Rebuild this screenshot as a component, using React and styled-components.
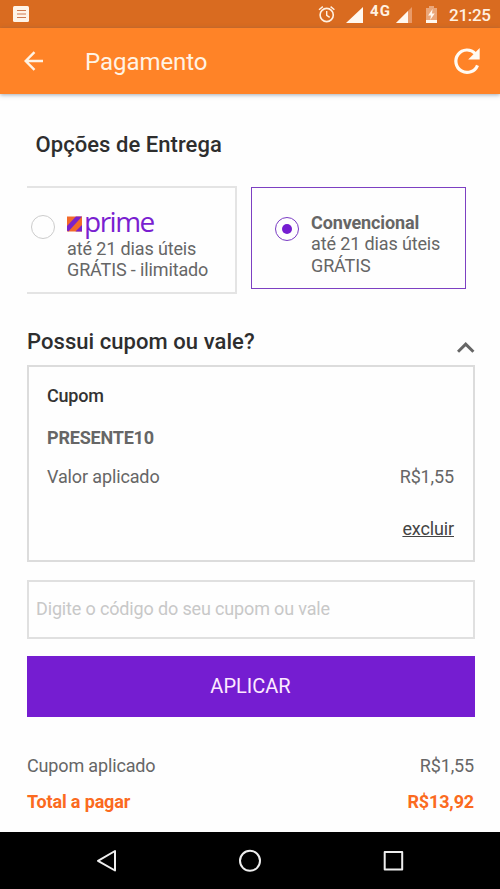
import styled, { createGlobalStyle } from 'styled-components';

const GlobalStyle = createGlobalStyle`
  * {
    box-sizing: border-box;
  }

  body {
    margin: 0;
    background: #fefefe;
    font-family: Roboto, sans-serif;
    color: #666;
  }
`;

const Screen = styled.div`
  width: 500px;
  height: 889px;
  display: flex;
  flex-direction: column;
  overflow: hidden;
`;

const StatusBar = styled.div`
  height: 28px;
  flex: none;
  display: flex;
  align-items: center;
  justify-content: space-between;
  background: #d96b20;
`;

const TopBar = styled.header`
  height: 66px;
  flex: none;
  display: flex;
  align-items: center;
  padding: 0 18px 0 23px;
  background: #ff8327;
  box-shadow: 0 1px 4px rgba(70, 90, 110, 0.5);
`;

const Title = styled.h1`
  flex: 1;
  margin: 2px 0 0 40px;
  font-size: 24px;
  font-weight: 400;
  line-height: 30px;
  letter-spacing: -0.05px;
  color: #fff3e4;
`;

const Icon = styled.svg`
  display: block;
  flex: none;
`;

const Content = styled.main`
  flex: 1;
  display: flex;
  flex-direction: column;
  padding: 36px 25px 0 27px;
`;

const Heading = styled.h2`
  margin: 0;
  padding-left: ${(props) => props.$indent || 0}px;
  font-size: 22px;
  font-weight: 500;
  line-height: ${(props) => props.$line || 30}px;
  letter-spacing: 0.06px;
  color: #2e2e2e;
`;

const Options = styled.div`
  display: flex;
  align-items: flex-start;
  gap: 14px;
  margin-top: 26px;
  height: 108px;
`;

const Option = styled.label`
  display: flex;
  width: ${(props) => (props.$selected ? 215 : 210)}px;
  height: ${(props) => (props.$selected ? 102 : 108)}px;
  margin-top: ${(props) => (props.$selected ? 1 : 0)}px;
  padding: ${(props) => (props.$selected ? '24px 0 0 23px' : '22px 0 0 4px')};
  border: ${(props) => (props.$selected ? '1px solid #7d40c2' : '2px solid #e4e4e4')};
  ${(props) => !props.$selected && 'border-left: none;'}
`;

const Radio = styled.span`
  flex: none;
  display: grid;
  place-items: center;
  width: 24px;
  height: 24px;
  margin-top: 5px;
  margin-right: 12px;
  border: 1px solid ${(props) => (props.$selected ? '#7a3cc4' : '#ccc')};
  border-radius: 50%;

  &::after {
    content: '';
    width: 10px;
    height: 10px;
    border-radius: 50%;
    background: ${(props) => (props.$selected ? '#751dd1' : 'transparent')};
  }
`;

const OptionText = styled.div`
  font-size: 18px;
  line-height: 21.3px;
  letter-spacing: -0.13px;
  white-space: nowrap;
`;

const PrimeLogo = styled.div`
  display: flex;
  align-items: flex-start;
  height: 28px;
  gap: 2px;
  padding-top: 6px;
`;

const PrimeName = styled.span`
  margin-top: -9px;
  font-family: 'Open Sans', sans-serif;
  font-size: 28px;
  line-height: 28px;
  letter-spacing: -1.5px;
  color: #7a1fd0;
`;

const CouponHeader = styled.div`
  display: flex;
  justify-content: space-between;
  margin-top: 32px;
  height: 39px;
`;

const CouponBox = styled.section`
  height: 197px;
  padding: 19px 19px 0 18px;
  border: 2px solid #dcdcdc;
  letter-spacing: -0.13px;
`;

const CouponTitle = styled.h3`
  margin: 0;
  font-size: 18px;
  font-weight: 500;
  line-height: 19px;
  letter-spacing: -0.2px;
  color: #333;
`;

const CouponCode = styled.p`
  margin: 23px 0 19px;
  font-size: 18px;
  font-weight: 700;
  line-height: 20px;
  letter-spacing: -0.2px;
`;

const Row = styled.div`
  display: flex;
  justify-content: space-between;
  font-size: 18px;
  line-height: 20px;
`;

const RemoveLink = styled.a`
  display: block;
  margin-top: 32px;
  font-size: 18px;
  line-height: 20px;
  text-align: right;
  text-decoration: underline;
  color: #444;
`;

const CouponInput = styled.input`
  height: 59px;
  flex: none;
  margin: 18px 0 17px;
  padding: 0 7px 3px;
  border: 2px solid #e0e0e0;
  border-radius: 0;
  outline: none;
  background: transparent;
  font-family: inherit;
  font-size: 18px;
  letter-spacing: -0.15px;

  &::placeholder {
    color: #c8c8c8;
    opacity: 1;
  }
`;

const ApplyButton = styled.button`
  height: 61px;
  flex: none;
  padding: 0 1px 1px 0;
  border: none;
  background: #751dd1;
  font-family: inherit;
  font-size: 20px;
  color: #fdeaff;
`;

const Summary = styled.div`
  display: flex;
  flex-direction: column;
  gap: 16px;
  margin-top: 39px;
  padding-right: 1px;
  letter-spacing: -0.15px;
`;

const TotalRow = styled(Row)`
  font-weight: 700;
  color: #fb6a20;
`;

const NavBar = styled.nav`
  height: 57px;
  flex: none;
  background: #000;
`;

const StatusIcons = () => (
  <StatusBar>
    <Icon width="500" height="28" viewBox="0 0 500 28">
      <rect x="13" y="6" width="16" height="16" rx="1.5" fill="#fff4e8" />
      <path d="M17 10.5h9M17 14h9M17 17.5h9" stroke="#cf7a50" strokeWidth="1.2" />
      <g fill="none" stroke="#fff1e2" strokeWidth="1.6">
        <circle cx="326.7" cy="15" r="6.6" />
        <path d="M326.700 11v4.400l3 2M319 9.800l3.800-3.200M334.400 9.800l-3.800-3.200" strokeWidth="1.4" />
      </g>
      <path d="M363 7v16h-17z" fill="#fff8f0" />
      <path d="M412 7v16h-16z" fill="#e99a68" />
      <path d="M408 11v12h-12z" fill="#fff8f0" />
      <path d="M426 8h3V6h5v2h3v15h-11z" fill="#eba679" />
      <path d="M426 20h11v3h-11zM432.600 9l-4.500 6.500h2.900l-.8 4.500 4.500-6.500h-2.800z" fill="#fff8f0" />
      <text x="370" y="15.500" fontSize="15" fontWeight="700" textLength="20" fill="#fff1e2">4G</text>
      <text x="449" y="21" fontSize="17" fontWeight="500" textLength="42" fill="#fff1e2">21:25</text>
    </Icon>
  </StatusBar>
);

const App = () => {
  return (
    <>
      <GlobalStyle />
      <Screen>
        <StatusIcons />
        <TopBar>
          <Icon width="22" height="22" viewBox="0 0 22 22" fill="none" stroke="#fff3e4" strokeWidth="2.4">
            <path d="M20 11H3M11.500 2.200L2.700 11l8.800 8.800" />
          </Icon>
          <Title>Pagamento</Title>
          <Icon width="30" height="30" viewBox="0 0 30 30">
            <path d="M25.500 19.300A11.200 11.200 0 1 1 23.200 7.500" fill="none" stroke="#fffaf3" strokeWidth="3.200" />
            <path d="M27.700 2v11.500H16.200z" fill="#fffaf3" />
          </Icon>
        </TopBar>
        <Content>
          <Heading $indent={8.5}>Opções de Entrega</Heading>
          <Options>
            <Option>
              <Radio />
              <OptionText>
                <PrimeLogo>
                  <Icon width="15" height="16" viewBox="0 0 16 16">
                    <path d="M0 0h16v16H0z" fill="#f26a2a" />
                    <path d="M0 15V10L9.500 0H16L1.500 16zM9 16l7-7v7z" fill="#7a22cc" />
                  </Icon>
                  <PrimeName>prime</PrimeName>
                </PrimeLogo>
                até 21 dias úteis
                <br />
                GRÁTIS - ilimitado
              </OptionText>
            </Option>
            <Option $selected>
              <Radio $selected />
              <OptionText>
                <b>Convencional</b>
                <br />
                até 21 dias úteis
                <br />
                GRÁTIS
              </OptionText>
            </Option>
          </Options>
          <CouponHeader>
            <Heading $line={32}>Possui cupom ou vale?</Heading>
            <Icon width="18" height="39" viewBox="0 0 18 39" fill="none" stroke="#666" strokeWidth="3">
              <path d="M1 25.800L8.700 18.200l7.700 7.600" />
            </Icon>
          </CouponHeader>
          <CouponBox>
            <CouponTitle>Cupom</CouponTitle>
            <CouponCode>PRESENTE10</CouponCode>
            <Row>
              <span>Valor aplicado</span>
              <span>R$1,55</span>
            </Row>
            <RemoveLink>excluir</RemoveLink>
          </CouponBox>
          <CouponInput placeholder="Digite o código do seu cupom ou vale" />
          <ApplyButton>APLICAR</ApplyButton>
          <Summary>
            <Row>
              <span>Cupom aplicado</span>
              <span>R$1,55</span>
            </Row>
            <TotalRow>
              <span>Total a pagar</span>
              <span>R$13,92</span>
            </TotalRow>
          </Summary>
        </Content>
        <NavBar>
          <Icon width="500" height="57" viewBox="0 0 500 57" fill="none" stroke="#eee" strokeWidth="2" strokeLinejoin="round">
            <path d="M115 19v19.500L98 28.800z" />
            <circle cx="250" cy="28.800" r="10" />
            <rect x="384.700" y="20" width="17.500" height="17.500" />
          </Icon>
        </NavBar>
      </Screen>
    </>
  );
};

export default App;
